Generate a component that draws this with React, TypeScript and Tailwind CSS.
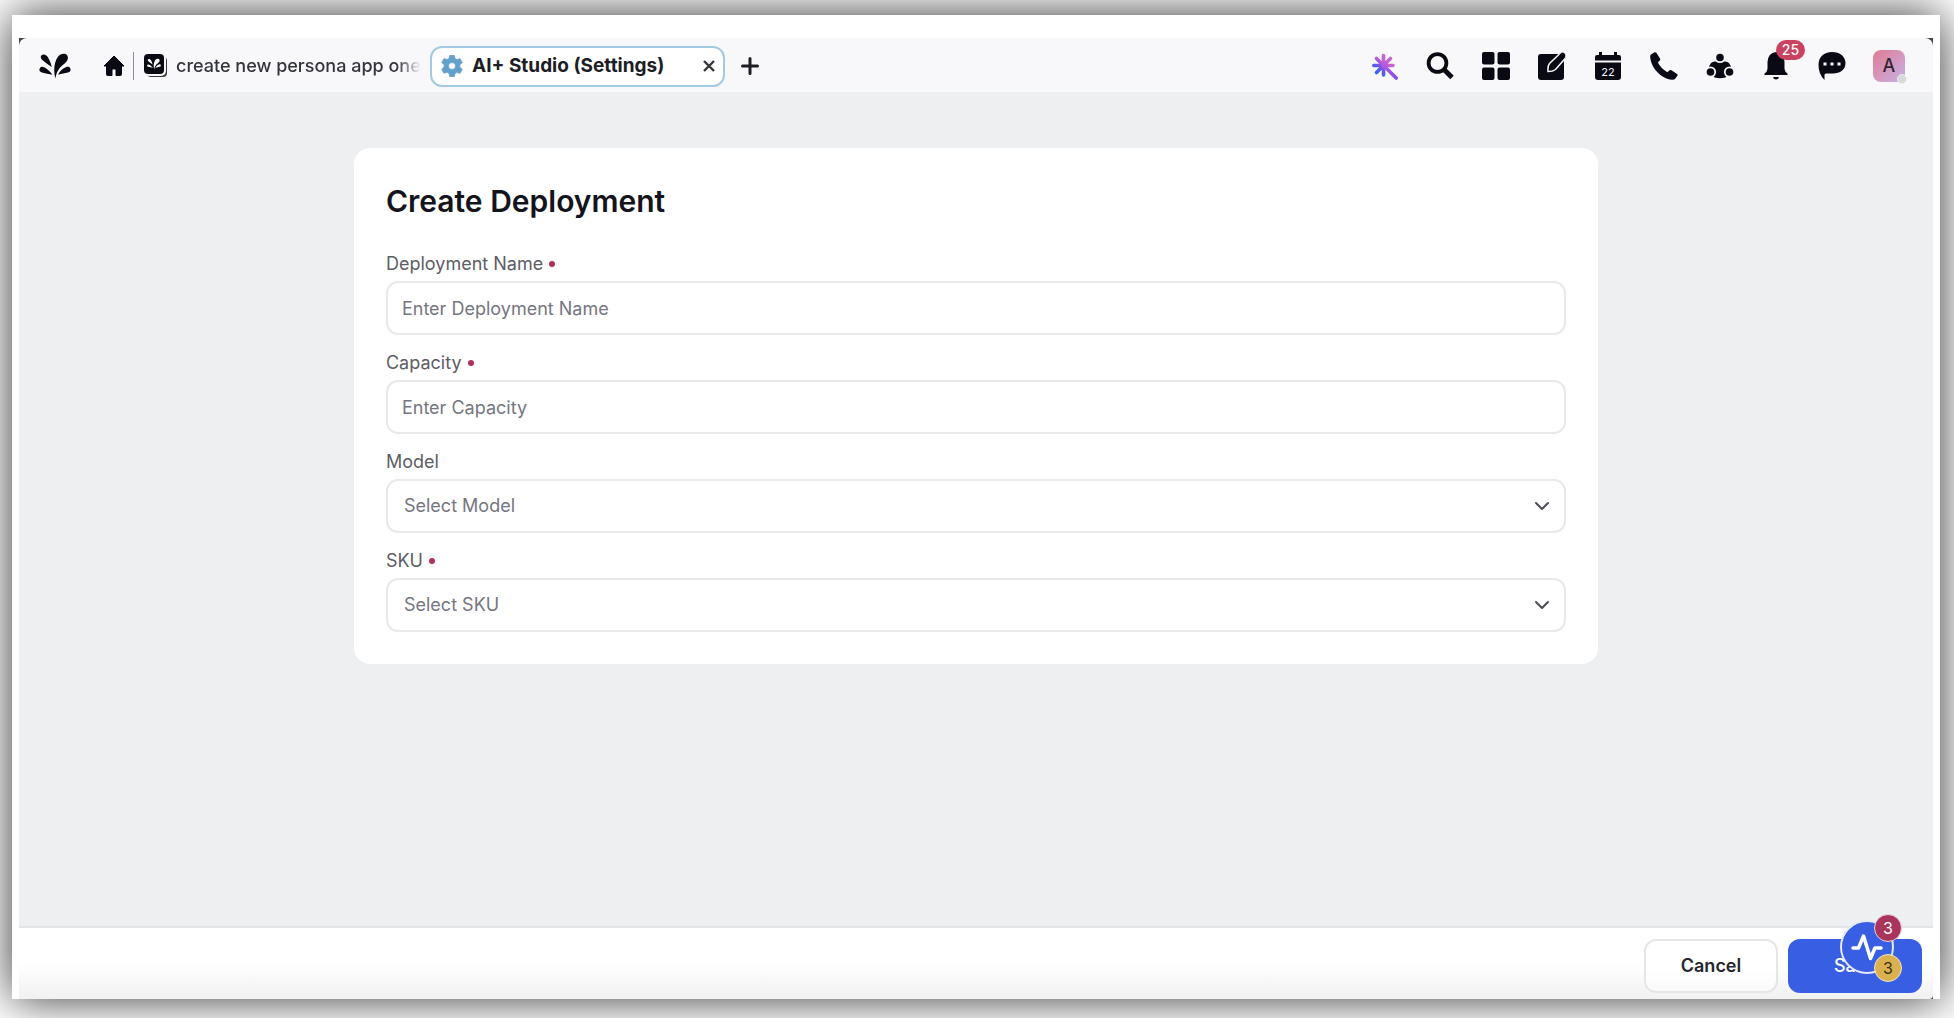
import { clsx } from "clsx";
import type { ReactNode } from "react";

type IconProps = { className?: string };

const leafPaths = [
  "M8 6C15 1 24 6 29 15C34 24 37 32 39 42C30 36 21 30 12 22C6 17 3 10 8 6Z",
  "M58 11C65 1 80 -2 86 6C92 14 87 25 78 32C66 41 56 48 50 77C44 55 46 27 58 11Z",
  "M3 45C7 39 15 42 22 47C29 52 35 58 41 66C30 64 20 62 9 59C2 57 -1 51 3 45Z",
  "M95 45C91 39 83 42 76 46C68 51 63 57 58 66C69 62 79 61 89 59C96 57 99 51 95 45Z",
];

function Logo({ className }: IconProps) {
  return (
    <svg viewBox="0 0 98 78" fill="currentColor" className={className}>
      {leafPaths.map((d) => (
        <path key={d} d={d} />
      ))}
    </svg>
  );
}

function HomeIcon() {
  return (
    <svg viewBox="0 0 22 22" fill="currentColor" className="size-[22px]">
      <path
        d="M11 1L21 11H18.500V19.500Q18.500 20.500 17.500 20.500H13V14H9V20.500H4.500Q3.500 20.500 3.500 19.500V11H1Z"
        stroke="currentColor"
        strokeLinejoin="round"
      />
    </svg>
  );
}

function GearIcon() {
  return (
    <svg viewBox="0 0 24 24" className="size-6 shrink-0 text-[#62a1cb]">
      <path
        fill="currentColor"
        fillRule="evenodd"
        stroke="currentColor"
        strokeWidth=".8"
        strokeLinejoin="round"
        d="M9.600 1.500h4.800l.6 3.100 1.900 1.100 3-1.100 2.400 4.100-2.500 2.100v2.400l2.500 2.100-2.400 4.100-3-1.100-1.900 1.100-.6 3.100H9.600L9 19.300 7.100 18.200l-3 1.100-2.400-4.100 2.500-2.100v-2.400L1.700 8.600l2.400-4.100 3 1.100L9 4.600zM12 8.500a3.500 3.500 0 1 0 0 7 3.500 3.500 0 0 0 0-7z"
      />
    </svg>
  );
}

function WandIcon() {
  return (
    <svg viewBox="0 0 28 28" className="size-7">
      <defs>
        <linearGradient id="wand" gradientUnits="userSpaceOnUse" x1="6" y1="20" x2="17" y2="8">
          <stop offset="0" stopColor="#2f68ee" />
          <stop offset=".4" stopColor="#7054ea" />
          <stop offset=".65" stopColor="#b95ad8" />
          <stop offset="1" stopColor="#c665cf" />
        </linearGradient>
        <linearGradient id="handle" gradientUnits="userSpaceOnUse" x1="13" y1="13" x2="28" y2="27">
          <stop offset="0" stopColor="#b45bdc" />
          <stop offset="1" stopColor="#7c4ef0" />
        </linearGradient>
      </defs>
      <g fill="none" strokeWidth="3.600" strokeLinecap="round">
        <path stroke="url(#wand)" d="M13.500 3.500V23M3.800 13.500H23M6.500 6.500L13.500 13.500M20.500 6.500L6.500 20.500" />
        <path stroke="url(#handle)" d="M13.500 13.500L26.200 26" />
      </g>
    </svg>
  );
}

function SearchIcon() {
  return (
    <svg viewBox="0 0 28 28" fill="none" stroke="currentColor" className="size-7">
      <circle cx="11.500" cy="11" r="8.900" strokeWidth="3.800" />
      <path d="M18 17.500L26 25.500" strokeWidth="5" />
    </svg>
  );
}

function GridIcon() {
  return (
    <svg viewBox="0 0 28 28" fill="currentColor" className="size-7">
      <rect x="0" y="0" width="12.500" height="12.500" rx="2" />
      <rect x="15.500" y="0" width="12.500" height="12.500" rx="2" />
      <rect x="0" y="15.500" width="12.500" height="12.500" rx="2" />
      <rect x="15.500" y="15.500" width="12.500" height="12.500" rx="2" />
    </svg>
  );
}

function ComposeIcon() {
  return (
    <svg viewBox="0 0 28 28" className="size-7">
      <rect x="0" y="2" width="26" height="26" rx="3" fill="currentColor" />
      <path
        d="M23 .5L11.500 11.500Q9.500 14 10 19.500Q15 19.500 17.500 17.500L28 5.500"
        fill="currentColor"
        stroke="#f8f8fa"
        strokeWidth="1.500"
      />
      <path d="M21 3.500L23.500 1Q25 0 26.500 1.500Q28 3 27 4.500L24.500 7Z" fill="currentColor" />
    </svg>
  );
}

function CalendarIcon() {
  return (
    <svg viewBox="0 0 28 28" fill="currentColor" className="size-7">
      <path d="M1 8.500V5Q1 3 3 3H5V0H8V3H20V0H23V3H25Q27 3 27 5V8.500Z" />
      <path d="M1 10.500H27V25Q27 28 24 28H4Q1 28 1 25Z" />
      <text x="14" y="24" textAnchor="middle" fontSize="11" fill="#f8f8fa">
        22
      </text>
    </svg>
  );
}

function PhoneIcon() {
  return (
    <svg viewBox="0 0 28 28" fill="currentColor" className="size-7">
      <path d="M1 2.500L4.500.300Q5.500-.2 6.300.8L10 6.500Q10.600 7.500 9.800 8.400L7.900 10.500Q10.500 16 17.300 20.200L19.500 18.300Q20.500 17.600 21.500 18.200L27 22Q28 22.800 27.400 23.800L25 27Q24 28 22 27.800C11 26.500 1 16 .2 5Q0 3.200 1 2.500Z" />
    </svg>
  );
}

function GroupIcon() {
  return (
    <svg viewBox="0 0 28 28" className="size-7">
      <path
        fill="currentColor"
        d="M5 11Q7 9 10 9.500L18 9.500Q21 9 23 11L25 14.500L22 21L19.500 25.500Q14 27 8.500 25.500L6 21L3 14.500Z"
      />
      <g fill="currentColor" stroke="#f8f8fa" strokeWidth="1.800">
        <circle cx="14" cy="5.500" r="4.700" />
        <circle cx="4.500" cy="20" r="4.700" />
        <circle cx="23.500" cy="20" r="4.700" />
      </g>
    </svg>
  );
}

function BellIcon() {
  return (
    <svg viewBox="0 0 28 28" fill="currentColor" className="size-7">
      <path d="M14 0Q22 1 22.500 10V17Q23 20 25.500 21.500V23H2.500V21.500Q5 20 5.500 17V10Q6 1 14 0Z" />
      <path d="M11 25H17Q16.500 27.500 14 27.500Q11.500 27.500 11 25Z" />
    </svg>
  );
}

function ChatIcon() {
  return (
    <svg viewBox="0 0 28 28" className="size-7">
      <path
        fill="currentColor"
        d="M14 0C22 0 27.500 4.500 27.500 11C27.500 17.500 22 21.500 15 21.500H8Q6.500 21.500 6.500 23V28Q.5 22 .5 13C.5 5 6 0 14 0Z"
      />
      <path d="M5.500 10.500h3v3h-3zM12.500 10.500h3v3h-3zM19.500 10.500h3v3h-3z" fill="#f8f8fa" />
    </svg>
  );
}

function ChevronIcon({ className }: IconProps) {
  return (
    <svg viewBox="0 0 16 10" fill="none" stroke="#4b4c55" strokeWidth="2" className={className}>
      <path d="M2 2L8 8L14 2" strokeLinecap="round" strokeLinejoin="round" />
    </svg>
  );
}

function PulseIcon() {
  return (
    <svg viewBox="0 0 32 28" fill="none" stroke="#fff" strokeWidth="3.500" className="h-7 w-8">
      <path d="M2 15H7.500L12.500 3L19.500 25.500L24 15H30" strokeLinecap="round" strokeLinejoin="round" />
    </svg>
  );
}

const tools = [
  { name: "Assistant", icon: WandIcon },
  { name: "Search", icon: SearchIcon },
  { name: "Apps", icon: GridIcon },
  { name: "Compose", icon: ComposeIcon },
  { name: "Calendar", icon: CalendarIcon },
  { name: "Calls", icon: PhoneIcon },
  { name: "Teams", icon: GroupIcon },
  { name: "Notifications", icon: BellIcon, badge: 25 },
  { name: "Messages", icon: ChatIcon },
];

function TopBar() {
  return (
    <header className="flex h-[54px] shrink-0 items-center rounded-t-lg bg-[#f8f8fa] pt-0.5 pr-7 pl-5 text-[#090a14]">
      <Logo className="h-[26px] w-8 shrink-0" />
      <button type="button" aria-label="Home" className="ml-8">
        <HomeIcon />
      </button>
      <span className="ml-2 h-7 w-px bg-[#8f8ea6]" />
      <nav className="ml-2.5 flex items-center">
        <button type="button" className="flex w-[280px] items-center gap-2">
          <span className="size-6 shrink-0">
            <span className="flex size-5 items-center justify-center rounded-sm bg-[#090a14] text-white shadow-[1px_1px_0_1px_#f8f8fa,3px_3px_0_0_#3a3b43]">
              <Logo className="h-3 w-3.5" />
            </span>
          </span>
          <span className="overflow-hidden mask-r-from-90% text-lg font-medium whitespace-nowrap text-[#33343c]">
            create new persona app one
          </span>
        </button>
        <div className="ml-1.5 flex h-[41px] w-[295px] items-center rounded-xl border-2 border-[#a3cae3] bg-white px-2">
          <GearIcon />
          <span className="ml-2 flex-1 text-[19px] font-bold whitespace-nowrap text-[#1c1d25]">
            AI+ Studio (Settings)
          </span>
          <button type="button" aria-label="Close tab">
            <svg viewBox="0 0 12 12" stroke="#33343c" strokeWidth="2.400" className="size-3">
              <path d="M1 1L11 11M11 1L1 11" />
            </svg>
          </button>
        </div>
        <button type="button" aria-label="New tab" className="ml-4">
          <svg viewBox="0 0 18 18" stroke="#1c1d25" strokeWidth="3" strokeLinecap="round" className="size-[18px]">
            <path d="M9 1.500V16.500M1.500 9H16.500" />
          </svg>
        </button>
      </nav>
      <div className="ml-auto flex items-center gap-7">
        {tools.map((tool) => (
          <button type="button" key={tool.name} aria-label={tool.name} className="relative">
            <tool.icon />
            {tool.badge ? (
              <span className="absolute -top-3 left-3.5 flex h-5 w-[29px] items-center justify-center rounded-full bg-[#c9425f] text-sm font-medium text-white">
                {tool.badge}
              </span>
            ) : null}
          </button>
        ))}
      </div>
      <button
        type="button"
        className="relative ml-[27px] size-8 rounded-lg bg-linear-135 from-[#df7a93] to-[#c6b0e6] text-lg font-medium text-[#33242f]"
      >
        A
        <span className="absolute -right-0.5 -bottom-0.5 size-2.5 rounded-full border border-[#ececec] bg-[#d8dad9]" />
      </button>
    </header>
  );
}

type FieldProps = {
  id: string;
  label: string;
  required?: boolean;
  children: ReactNode;
};

function Field({ id, label, required, children }: FieldProps) {
  return (
    <div>
      <div className="mb-[5px] flex items-center gap-1.5">
        <label htmlFor={id} className="text-lg leading-6 text-[#5c5d66]">
          {label}
        </label>
        {required ? <span className="size-1.5 rounded-full bg-[#b0305a]" /> : null}
      </div>
      {children}
    </div>
  );
}

const controlClass =
  "block h-[54px] w-full rounded-xl border-2 border-[#e9e9eb] bg-white text-lg text-[#75767f] outline-none placeholder:text-[#75767f]";

function TextField({ id, label }: { id: string; label: string }) {
  return (
    <Field id={id} label={label} required>
      <input id={id} type="text" placeholder={`Enter ${label}`} className={clsx(controlClass, "px-3.5")} />
    </Field>
  );
}

function SelectField({ id, label, required }: { id: string; label: string; required?: boolean }) {
  return (
    <Field id={id} label={label} required={required}>
      <div className="relative">
        <select id={id} className={clsx(controlClass, "appearance-none px-4")}>
          <option>Select {label}</option>
        </select>
        <ChevronIcon className="pointer-events-none absolute top-[22px] right-4 h-2.5 w-4" />
      </div>
    </Field>
  );
}

function DeploymentForm() {
  return (
    <form className="w-[65%] rounded-2xl bg-white p-8">
      <h1 className="mb-[30px] text-3xl leading-[42px] font-semibold text-[#13141c]">
        Create Deployment
      </h1>
      <div className="flex flex-col gap-4">
        <TextField id="deployment-name" label="Deployment Name" />
        <TextField id="capacity" label="Capacity" />
        <SelectField id="model" label="Model" />
        <SelectField id="sku" label="SKU" required />
      </div>
    </form>
  );
}

function ActivityButton() {
  return (
    <button
      type="button"
      aria-label="Activity"
      className="absolute -top-2 right-[39px] flex size-[54px] items-center justify-center rounded-full border-2 border-[#e4e9fb] bg-[#385ee4]"
    >
      <PulseIcon />
      <span className="absolute -top-2 -right-2.5 flex size-7 items-center justify-center rounded-full border border-[#e9d5dd] bg-[#a9345c] text-base text-white">
        3
      </span>
      <span className="absolute -right-2.5 -bottom-2.5 flex size-7 items-center justify-center rounded-full border border-[#f0e6cd] bg-[#dbb04e] text-base text-[#33301f]">
        3
      </span>
    </button>
  );
}

function FooterBar() {
  return (
    <footer className="relative flex shrink-0 justify-end gap-2.5 rounded-br-sm border-t-2 border-[#e3e4e6] bg-linear-to-b from-white from-50% to-[#f1f1f1] px-[11px] pt-[11px] pb-1.5">
      <button
        type="button"
        className="h-[54px] w-[134px] rounded-xl border-2 border-[#e6e6e8] bg-white/60 text-lg font-semibold text-[#25262e]"
      >
        Cancel
      </button>
      <button type="button" className="h-[54px] w-[134px] rounded-xl bg-[#385ee4] text-lg font-medium text-white">
        Save
      </button>
      <ActivityButton />
    </footer>
  );
}

export default function App() {
  return (
    <div className="flex min-h-screen overflow-hidden bg-white pt-[15px] pr-3.5 pb-[19px] pl-3 font-[Inter,sans-serif]">
      <div className="flex flex-1 flex-col bg-white px-[7px] pt-[23px] shadow-[0_0_44px_rgba(0,0,0,0.8)]">
        <div className="flex flex-1 flex-col bg-[#444]">
          <TopBar />
          <main className="flex flex-1 flex-col items-center bg-[#edeff1] py-14">
            <DeploymentForm />
          </main>
          <FooterBar />
        </div>
      </div>
    </div>
  );
}
